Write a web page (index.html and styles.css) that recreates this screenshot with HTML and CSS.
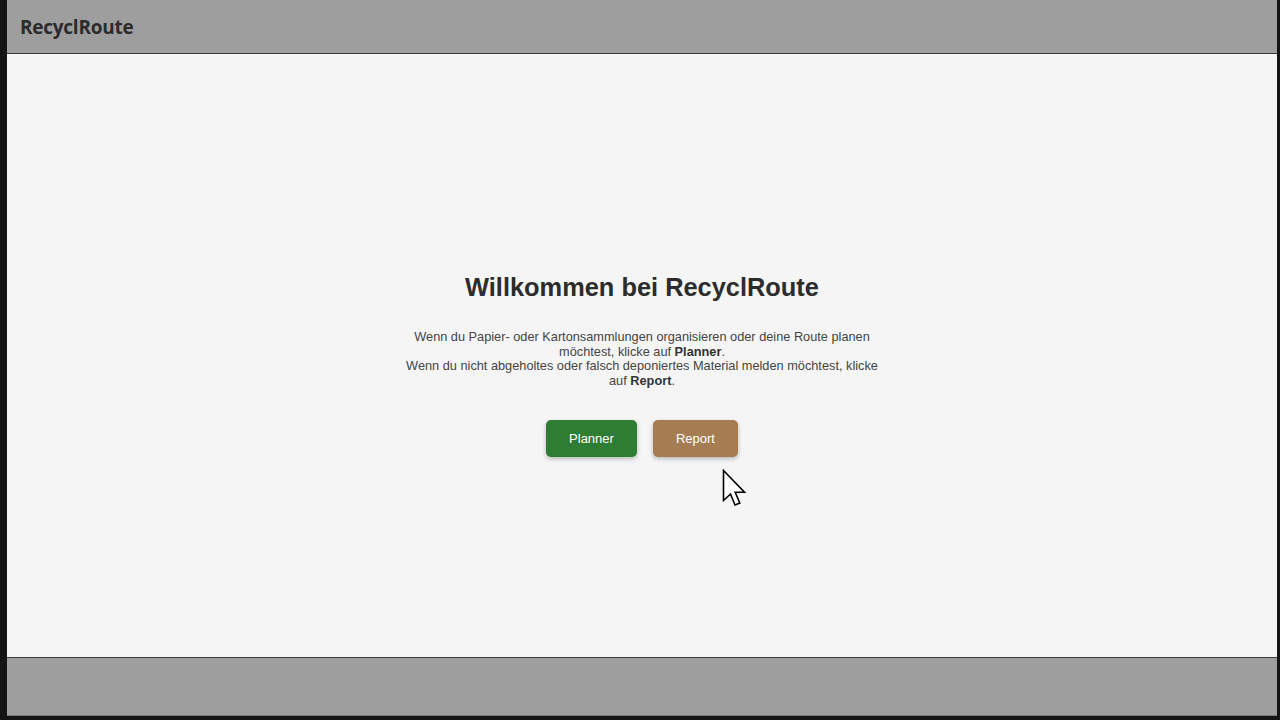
FILE: index.html
```html
<!DOCTYPE html>
<html lang="de">
<head>
<meta charset="utf-8">
<title>RecyclRoute</title>
<link rel="stylesheet" href="styles.css">
</head>
<body>
<div class="frame">
  <header class="topbar">
    <span class="brand">RecyclRoute</span>
  </header>
  <main class="content">
    <section class="welcome">
      <h1 class="title">Willkommen bei RecyclRoute</h1>
      <p class="intro">Wenn du Papier- oder Kartonsammlungen organisieren oder deine Route planen möchtest, klicke auf <strong>Planner</strong>.<br>Wenn du nicht abgeholtes oder falsch deponiertes Material melden möchtest, klicke auf <strong>Report</strong>.</p>
      <div class="actions">
        <button class="btn btn-planner">Planner</button>
        <button class="btn btn-report">Report</button>
      </div>
    </section>
  </main>
  <footer class="bottombar"></footer>
</div>
<svg class="cursor" width="28" height="42" viewBox="0 0 28 42">
  <path d="M1.5 1.5 L1.5 31.5 L8.5 25 L13 36 L17.8 34 L13.2 23.2 L22.5 23.2 Z" fill="#fff" stroke="#000" stroke-width="1.6" stroke-linejoin="miter"/>
</svg>
</body>
</html>
```

FILE: styles.css
```css
html, body {
  margin: 0;
  padding: 0;
  height: 100%;
}

body {
  background: #141414;
  font-family: "Liberation Sans", Arial, sans-serif;
  position: relative;
  overflow: hidden;
}

.frame {
  height: 716px;
  margin-left: 7px;
  margin-right: 3px;
  display: flex;
  flex-direction: column;
  background: #f5f5f5;
}

.topbar {
  height: 53px;
  background: #9e9e9e;
  border-bottom: 1px solid #3a3a3a;
  display: flex;
  align-items: center;
  padding-left: 13px;
  box-sizing: content-box;
}

.brand {
  font-family: "Open Sans", "Segoe UI", sans-serif;
  font-weight: 700;
  font-size: 19px;
  color: #2b2b2b;
  letter-spacing: -0.25px;
  margin-top: 1px;
}

.content {
  flex: 1;
  display: flex;
  align-items: center;
  justify-content: center;
  background: #f5f5f5;
}

.welcome {
  text-align: center;
  max-width: 480px;
  margin-top: 19px;
}

.title {
  margin: 0 0 28px 0;
  font-size: 25.4px;
  font-weight: 700;
  color: #2c2c2c;
}

.intro {
  margin: 0 0 32px 0;
  font-size: 12.75px;
  line-height: 14.5px;
  color: #444;
}

.intro strong {
  color: #333;
}

.actions {
  display: flex;
  justify-content: center;
  gap: 16px;
}

.btn {
  font-family: "Liberation Sans", Arial, sans-serif;
  font-size: 13px;
  color: #fff;
  border: none;
  border-radius: 5px;
  padding: 11px 23px;
  line-height: 15px;
  height: 37px;
  box-shadow: 0 2px 4px rgba(0, 0, 0, 0.25);
  cursor: pointer;
}

.btn-planner {
  background: #2e7d32;
}

.btn-report {
  background: #a67c52;
}

.bottombar {
  height: 57px;
  background: #9e9e9e;
  border-top: 1px solid #3a3a3a;
  border-bottom: 1px solid #7a7a7a;
}

.cursor {
  position: absolute;
  left: 722px;
  top: 469px;
}
```
